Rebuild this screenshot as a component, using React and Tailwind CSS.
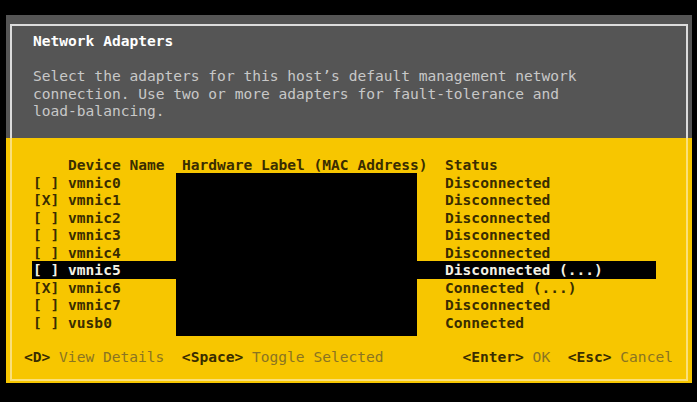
const devices = [
  { checked: false, name: "vmnic0", status: "Disconnected" },
  { checked: true, name: "vmnic1", status: "Disconnected" },
  { checked: false, name: "vmnic2", status: "Disconnected" },
  { checked: false, name: "vmnic3", status: "Disconnected" },
  { checked: false, name: "vmnic4", status: "Disconnected" },
  { checked: false, name: "vmnic5", status: "Disconnected (...)", selected: true },
  { checked: true, name: "vmnic6", status: "Connected (...)" },
  { checked: false, name: "vmnic7", status: "Disconnected" },
  { checked: false, name: "vusb0", status: "Connected" },
];

const pad = (s, n) => s + " ".repeat(Math.max(0, n - s.length));

const Key = ({ k, label }) => (
  <>
    <span className="font-bold text-[#3a2d00]">{k}</span>
    <span className="text-[#8a7422]"> {label}</span>
  </>
);

const App = () => {
  return (
    <div
      className="w-[697px] h-[402px] bg-black overflow-hidden pt-[15px] pl-[6px] text-[14.57px] leading-[17.55px] whitespace-pre"
      style={{ fontFamily: '"DejaVu Sans Mono", "Liberation Mono", monospace' }}
    >
      <div className="w-[686px] flex flex-col">
        {/* Header panel */}
        <div className="bg-[#555555] h-[123px] pt-[9px] px-[4px]">
          <div className="h-full border-t-2 border-x-2 border-[#dcdcdc] pl-[21px] pt-[6px]">
            <div className="font-bold text-white">Network Adapters</div>
            <div className="h-[17.55px]" />
            <div className="text-[#c8c8c8]">
              <div>Select the adapters for this host’s default management network</div>
              <div>connection. Use two or more adapters for fault-tolerance and</div>
              <div>load-balancing.</div>
            </div>
          </div>
        </div>

        {/* Adapter list */}
        <div className="bg-[#f7c600] h-[245px] px-[4px] pb-[2px]">
          <div className="h-full border-x-2 border-b-2 border-[#fbe07a] pt-[18px]">
            <div className="relative pl-[21px] font-bold text-[#3a2d00]">
              <div>{"    Device Name  Hardware Label (MAC Address)  Status"}</div>
              {devices.map((d) => (
                <div
                  key={d.name}
                  className={d.selected ? "w-[calc(71ch+2px)] -ml-px pl-px bg-black text-[#f4f1e4]" : ""}
                >
                  {pad(`${d.checked ? "[X]" : "[ ]"} ${d.name}`, 47) + d.status}
                </div>
              ))}
              <div className="absolute left-[164px] top-[17px] w-[241px] h-[163px] bg-black" />
            </div>

            <div className="h-[16.55px]" />

            {/* Key hints */}
            <div className="pl-[12px]">
              <Key k="<D>" label="View Details" />
              {"  "}
              <Key k="<Space>" label="Toggle Selected" />
              {"         "}
              <Key k="<Enter>" label="OK" />
              {"  "}
              <Key k="<Esc>" label="Cancel" />
            </div>
          </div>
        </div>
      </div>
    </div>
  );
};

export default App;
